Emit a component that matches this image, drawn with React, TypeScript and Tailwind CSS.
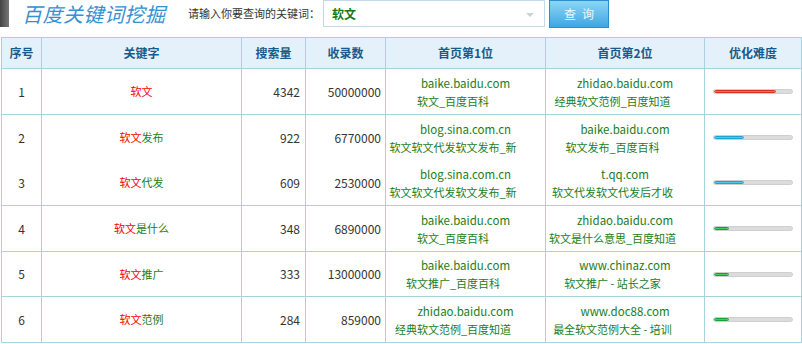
import React from 'react'

type Row = {
  id: number
  rest: string
  search: number
  indexed: number
  first: [string, string]
  second: [string, string]
  level: 'red' | 'blue' | 'green'
  pct: number
  joinNext?: boolean
}

const rows: Row[] = [
  { id: 1, rest: '', search: 4342, indexed: 50000000, first: ['baike.baidu.com', '软文_百度百科'], second: ['zhidao.baidu.com', '经典软文范例_百度知道'], level: 'red', pct: 80 },
  { id: 2, rest: '发布', search: 922, indexed: 6770000, first: ['blog.sina.com.cn', '软文软文代发软文发布_新'], second: ['baike.baidu.com', '软文发布_百度百科'], level: 'blue', pct: 38, joinNext: true },
  { id: 3, rest: '代发', search: 609, indexed: 2530000, first: ['blog.sina.com.cn', '软文软文代发软文发布_新'], second: ['t.qq.com', '软文代发软文代发后才收'], level: 'blue', pct: 38 },
  { id: 4, rest: '是什么', search: 348, indexed: 6890000, first: ['baike.baidu.com', '软文_百度百科'], second: ['zhidao.baidu.com', '软文是什么意思_百度知道'], level: 'green', pct: 19 },
  { id: 5, rest: '推广', search: 333, indexed: 13000000, first: ['baike.baidu.com', '软文推广_百度百科'], second: ['www.chinaz.com', '软文推广 - 站长之家'], level: 'green', pct: 19 },
  { id: 6, rest: '范例', search: 284, indexed: 859000, first: ['zhidao.baidu.com', '经典软文范例_百度知道'], second: ['www.doc88.com', '最全软文范例大全 - 培训'], level: 'green', pct: 19 },
]

const heights = ['h-[46px]', 'h-[45px]', 'h-[46px]', 'h-[46px]', 'h-[45px]', 'h-[46px]']

const fills = {
  red: 'bg-gradient-to-b from-[#ff8a3a] to-[#f05a10] border border-[#d8301c]',
  blue: 'bg-gradient-to-b from-[#6fdaf5] to-[#24b4e0] border border-[#1fa3cf]',
  green: 'bg-gradient-to-b from-[#5fe07a] to-[#1fb83e] border border-[#16a232]',
}

function Rank({ site, title }: { site: string; title: string }) {
  return (
    <div className="flex flex-col items-center whitespace-nowrap leading-[18px] text-[11px] text-[#1a7d1a]">
      <span className="text-[11.5px]">{site}</span>
      <span className="pr-[25px]">{title}</span>
    </div>
  )
}

export default function App() {
  const font = { fontFamily: '"Noto Sans CJK SC", "Noto Sans", sans-serif' }
  return (
    <div className="w-[802px] h-[344px] overflow-hidden bg-white" style={font}>
      {/* Top bar */}
      <div className="flex items-start h-[37px]">
        <div className="w-[9px] h-[27px] bg-gradient-to-r from-[#444] to-[#777]" />
        <div className="w-[179px] pl-[13px] h-[27px] flex items-center">
          <span className="text-[20px] italic text-[#3590d3] tracking-[0.5px] leading-none">百度关键词挖掘</span>
        </div>
        <div className="w-[135px] h-[27px] flex items-center text-[11px] text-[#333]">请输入你要查询的关键词：</div>
        <div className="relative w-[222px] h-[27px] border border-[#c4d9e6] flex items-center pl-[8px] text-[12px] font-bold text-[#137a13]">
          软文
          <span className="absolute right-[10px] top-[12px] w-0 h-0 border-l-[4px] border-r-[4px] border-t-[4px] border-l-transparent border-r-transparent border-t-[#c8d3da]" />
        </div>
        <button className="ml-[4px] w-[60px] h-[28px] bg-gradient-to-b from-[#8ad6f7] to-[#3da6e2] border border-[#2c8ecd] text-[12px] text-[#eaf7ff] tracking-[6px] pl-[6px]">
          查询
        </button>
      </div>

      {/* Table */}
      <div className="ml-[1px] w-[803px] border-l border-t border-[#a9d2e1] text-[12px]">
        <div className="flex h-[31px] bg-[#e4f1fa] border-b border-[#a9d2e1] font-bold text-[#1a5a8a]">
          <div className="w-[40px] border-r border-[#a9d2e1] flex items-center justify-center">序号</div>
          <div className="w-[200px] border-r border-[#a9d2e1] flex items-center justify-center">关键字</div>
          <div className="w-[64px] border-r border-[#a9d2e1] flex items-center justify-center">搜索量</div>
          <div className="w-[80px] border-r border-[#a9d2e1] flex items-center justify-center">收录数</div>
          <div className="w-[160px] border-r border-[#a9d2e1] flex items-center justify-center">首页第1位</div>
          <div className="w-[159px] border-r border-[#a9d2e1] flex items-center justify-center">首页第2位</div>
          <div className="w-[97px] border-r border-[#a9d2e1] flex items-center justify-center">优化难度</div>
        </div>
        {rows.map((r, i) => (
          <div
            key={r.id}
            className={`flex ${heights[i]} ${r.joinNext ? '' : 'border-b border-[#a9d2e1]'} text-[#333]`}
          >
            <div className="w-[40px] border-r border-[#a9d2e1] flex items-center justify-center">{r.id}</div>
            <div className="w-[200px] border-r border-[#a9d2e1] flex items-center justify-center text-[11px]">
              <span className="text-[#f00]">软文</span>
              <span className="text-[#1a7d1a]">{r.rest}</span>
            </div>
            <div className="w-[64px] border-r border-[#a9d2e1] flex items-center justify-end pr-[5px]">{r.search}</div>
            <div className="w-[80px] border-r border-[#a9d2e1] flex items-center justify-end pr-[4px]">{r.indexed}</div>
            <div className="w-[160px] border-r border-[#a9d2e1] flex items-center justify-center">
              <Rank site={r.first[0]} title={r.first[1]} />
            </div>
            <div className="w-[159px] border-r border-[#a9d2e1] flex items-center justify-center">
              <Rank site={r.second[0]} title={r.second[1]} />
            </div>
            <div className="w-[97px] border-r border-[#a9d2e1] flex items-center pl-[8px]">
              <div className="w-[80px] h-[5px] rounded-full bg-[#dcdcdc] border border-[#cfcfcf] overflow-hidden flex">
                <div className={`h-full rounded-full ${fills[r.level]}`} style={{ width: `${r.pct}%` }} />
              </div>
            </div>
          </div>
        ))}
      </div>
    </div>
  )
}
